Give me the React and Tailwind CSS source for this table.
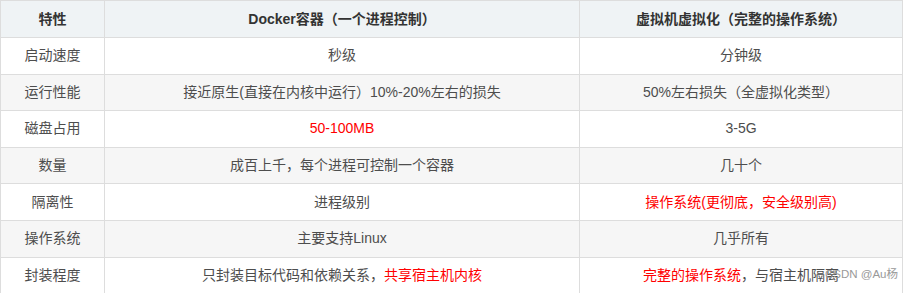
import React from 'react';

const rows = [
    { name: '启动速度', docker: '秒级', vm: '分钟级' },
    { name: '运行性能', docker: '接近原生(直接在内核中运行）10%-20%左右的损失', vm: '50%左右损失（全虚拟化类型）' },
    { name: '磁盘占用', docker: <span className="text-[#ff0000]">50-100MB</span>, vm: '3-5G' },
    { name: '数量', docker: '成百上千，每个进程可控制一个容器', vm: '几十个' },
    { name: '隔离性', docker: '进程级别', vm: <span className="text-[#ff0000]">操作系统(更彻底，安全级别高)</span> },
    { name: '操作系统', docker: '主要支持Linux', vm: '几乎所有' },
    {
        name: '封装程度',
        docker: <>只封装目标代码和依赖关系，<span className="text-[#ff0000]">共享宿主机内核</span></>,
        vm: <><span className="text-[#ff0000]">完整的操作系统</span>，与宿主机隔离</>,
    },
];

const App = () => {
    return (
        <div className="relative w-[903px] h-[293px] overflow-hidden bg-white font-['Liberation_Sans','Noto_Sans_CJK_SC',sans-serif] text-[14px] text-[#4d4d4d]">
            <table className="w-[902px] border-collapse table-fixed">
                <colgroup>
                    <col className="w-[104px]" />
                    <col className="w-[475px]" />
                    <col className="w-[323px]" />
                </colgroup>
                <thead>
                    <tr className="bg-[#eff3f5] h-[37px]">
                        <th className="border border-[#dddddd] font-bold text-[#333333] p-0">特性</th>
                        <th className="border border-[#dddddd] font-bold text-[#333333] p-0">Docker容器（一个进程控制）</th>
                        <th className="border border-[#dddddd] font-bold text-[#333333] p-0">虚拟机虚拟化（完整的操作系统）</th>
                    </tr>
                </thead>
                <tbody>
                    {rows.map((row, i) => (
                        <tr key={row.name} className={`h-[36.6px] ${i % 2 === 1 ? 'bg-[#f6f6f6]' : 'bg-white'}`}>
                            <td className="border border-[#dddddd] text-center p-0">{row.name}</td>
                            <td className="border border-[#dddddd] text-center p-0">{row.docker}</td>
                            <td className="border border-[#dddddd] text-center p-0">{row.vm}</td>
                        </tr>
                    ))}
                </tbody>
            </table>
            {/* watermark */}
            <div className="absolute left-[825px] top-[269px] whitespace-nowrap text-[11.5px] text-[#999999] leading-none">CSDN @Au杨</div>
        </div>
    );
};

export default App;
